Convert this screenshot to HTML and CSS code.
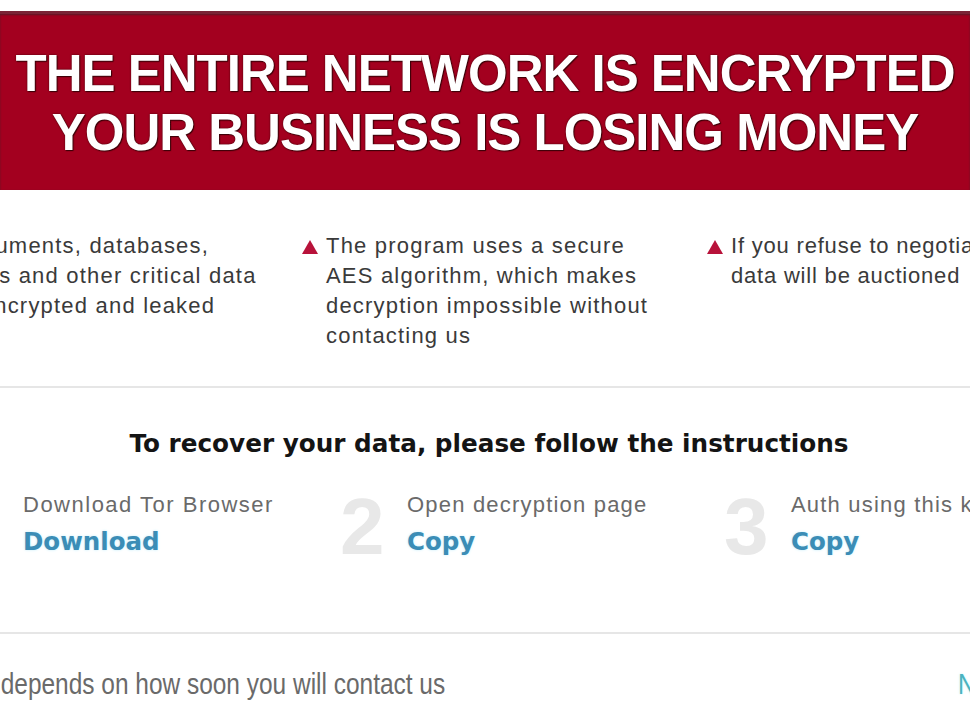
FILE: index.html
```html
<!DOCTYPE html>
<html lang="en">
<head>
<meta charset="utf-8">
<title>Notice</title>
<link rel="stylesheet" href="styles.css">
</head>
<body>
<div class="page">
  <div class="top-strip"></div>
  <header class="banner">
    <div class="banner-line">THE ENTIRE NETWORK IS ENCRYPTED</div>
    <div class="banner-line">YOUR BUSINESS IS LOSING MONEY</div>
  </header>

  <section class="facts">
    <div class="fact">
      <svg class="tri" viewBox="0 0 16 14" width="16" height="14"><polygon points="8,0 16,14 0,14"/></svg>
      <p class="fact-text">All documents, databases,<br>backups and other critical data<br>were encrypted and leaked</p>
    </div>
    <div class="fact">
      <svg class="tri" viewBox="0 0 16 14" width="16" height="14"><polygon points="8,0 16,14 0,14"/></svg>
      <p class="fact-text">The program uses a secure<br>AES algorithm, which makes<br>decryption impossible without<br>contacting us</p>
    </div>
    <div class="fact">
      <svg class="tri" viewBox="0 0 16 14" width="16" height="14"><polygon points="8,0 16,14 0,14"/></svg>
      <p class="fact-text fact-text-tight">If you refuse to negotiate, your<br>data will be auctioned</p>
    </div>
  </section>

  <hr class="divider">

  <section class="recover">
    <h2 class="recover-title">To recover your data, please follow the instructions</h2>
    <div class="steps">
      <div class="step">
        <span class="step-num">1</span>
        <div class="step-body">
          <div class="step-label step-label-wide">Download Tor Browser</div>
          <div class="step-link">Download</div>
        </div>
      </div>
      <div class="step">
        <span class="step-num">2</span>
        <div class="step-body">
          <div class="step-label">Open decryption page</div>
          <div class="step-link">Copy</div>
        </div>
      </div>
      <div class="step">
        <span class="step-num">3</span>
        <div class="step-body">
          <div class="step-label">Auth using this key</div>
          <div class="step-link">Copy</div>
        </div>
      </div>
    </div>
  </section>

  <hr class="divider divider-low">

  <footer class="footer">
    <span class="footer-text">The price depends on how soon you will contact us</span>
    <span class="footer-link">Next</span>
  </footer>
</div>
</body>
</html>
```

FILE: styles.css
```css
html, body {
  margin: 0;
  padding: 0;
  background: #ffffff;
}

body {
  width: 970px;
  height: 720px;
  overflow: hidden;
  font-family: "Liberation Sans", Arial, sans-serif;
}

.page {
  width: 970px;
  overflow: hidden;
}

.top-strip {
  height: 11px;
  background: #ffffff;
}

.banner {
  box-sizing: border-box;
  height: 179px;
  padding-top: 30px;
  background: #a3001f;
  border-top: 3px solid #7a2436;
  box-shadow: inset 0 1px 2px #5a1a28;
  color: #ffffff;
  text-align: center;
  font-weight: 700;
  font-size: 51px;
  line-height: 59px;
  letter-spacing: -1px;
  white-space: nowrap;
  text-shadow: 0 0 2px #3a0008, 1px 1px 1px #3a0008;
}

.banner-line {
  display: block;
}

.facts {
  display: flex;
  margin-left: -103px;
  margin-top: 41px;
  width: 1300px;
}

.fact {
  flex: 0 0 405px;
  display: flex;
  align-items: flex-start;
}

.tri {
  flex: 0 0 16px;
  margin-top: 9px;
  margin-right: 8px;
  fill: #b8123a;
}

.fact-text {
  margin: 0;
  font-size: 22px;
  line-height: 30px;
  letter-spacing: 1.2px;
  color: #3a3a3a;
  white-space: nowrap;
}

.fact-text-tight {
  letter-spacing: 0.8px;
}

.divider {
  border: 0;
  height: 2px;
  background: #e6e6e6;
  margin: 35px 0 0 0;
}

.recover {
  margin-top: 41px;
}

.recover-title {
  margin: 0;
  padding-left: 8px;
  text-align: center;
  font-family: "DejaVu Sans", Verdana, sans-serif;
  font-weight: 700;
  font-size: 24.7px;
  line-height: 30px;
  color: #141414;
  white-space: nowrap;
}

.steps {
  display: flex;
  margin-left: -44px;
  margin-top: 31px;
  width: 1300px;
}

.step {
  flex: 0 0 384px;
  display: flex;
  align-items: center;
}

.step-num {
  flex: 0 0 67px;
  font-family: "Liberation Sans", Arial, sans-serif;
  font-weight: 700;
  font-size: 80px;
  line-height: 74px;
  color: #e8e8e8;
}

.step-body {
  display: flex;
  flex-direction: column;
}

.step-label {
  font-size: 22px;
  line-height: 30px;
  letter-spacing: 1.2px;
  color: #6a6a6a;
  white-space: nowrap;
}

.step-label-wide {
  letter-spacing: 1.5px;
}

.step-link {
  font-family: "DejaVu Sans", Verdana, sans-serif;
  font-weight: 700;
  font-size: 24.5px;
  line-height: 44px;
  color: #3b8db6;
  text-shadow: 0 0 3px #c6eefa;
}

.divider-low {
  margin-top: 68px;
}

.footer {
  display: flex;
  margin-left: -108px;
  margin-top: 33px;
  width: 1300px;
}

.footer-text {
  flex: 0 0 1066px;
  font-size: 30px;
  line-height: 34px;
  color: #6a6a6a;
  white-space: nowrap;
  transform: scaleX(0.815);
  transform-origin: left center;
}

.footer-link {
  font-size: 30px;
  line-height: 34px;
  color: #4ab3bf;
  text-shadow: 0 0 3px #c6f4f6;
  white-space: nowrap;
  transform: scaleX(0.815);
  transform-origin: left center;
}
```
